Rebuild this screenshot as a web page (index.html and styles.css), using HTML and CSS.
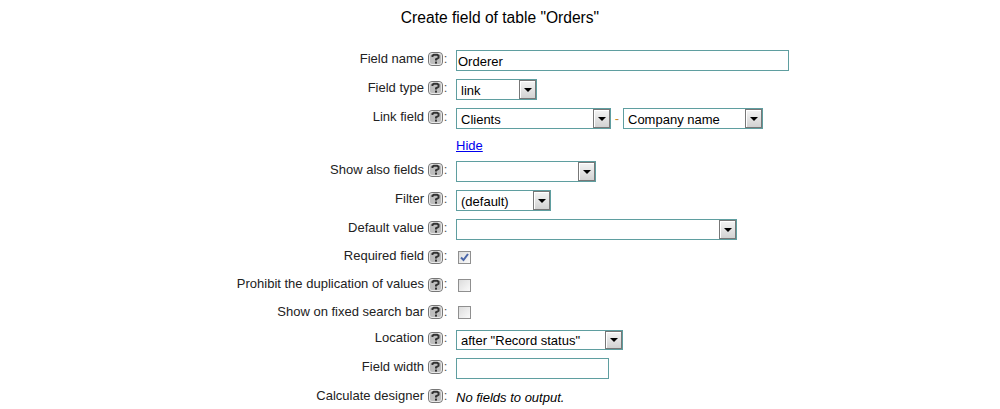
FILE: index.html
```html
<!DOCTYPE html>
<html lang="en">
<head>
<meta charset="utf-8">
<title>Create field</title>
<link rel="stylesheet" href="styles.css">
</head>
<body>
<svg class="defs" width="0" height="0" aria-hidden="true">
  <symbol id="help" viewBox="0 0 15 14">
    <rect x="0.5" y="0.5" width="14" height="13" rx="3.5" fill="#bdbdbd" stroke="#777"/>
    <rect x="1.5" y="1.5" width="12" height="11" rx="2.5" fill="none" stroke="#e8e8e8"/>
    <path d="M4.5 5V3.8L5.8 2.8H9.2L10.5 3.8V5.8L8 7.4V8.6" fill="none" stroke="#333" stroke-width="2"/>
    <rect x="7" y="9.6" width="2" height="2" fill="#333"/>
  </symbol>
</svg>
<h1 class="title">Create field of table "Orders"</h1>
<div class="form">
  <div class="row h29"><div class="label">Field name<svg class="help"><use href="#help"/></svg><span class="colon">:</span></div><div class="ctl"><input class="text w333" type="text" value="Orderer"></div></div>
  <div class="row h29"><div class="label">Field type<svg class="help"><use href="#help"/></svg><span class="colon">:</span></div><div class="ctl"><div class="select w81"><span class="val">link</span><span class="btn"></span></div></div></div>
  <div class="row h29"><div class="label">Link field<svg class="help"><use href="#help"/></svg><span class="colon">:</span></div><div class="ctl"><div class="select w155"><span class="val">Clients</span><span class="btn"></span></div><span class="sep">-</span><div class="select w140"><span class="val">Company name</span><span class="btn"></span></div></div></div>
  <div class="row h24"><div class="label"></div><div class="ctl hide-cell"><a class="link" href="#">Hide</a></div></div>
  <div class="row h29"><div class="label">Show also fields<svg class="help"><use href="#help"/></svg><span class="colon">:</span></div><div class="ctl"><div class="select w140"><span class="val"></span><span class="btn"></span></div></div></div>
  <div class="row h29"><div class="label">Filter<svg class="help"><use href="#help"/></svg><span class="colon">:</span></div><div class="ctl"><div class="select w95"><span class="val">(default)</span><span class="btn"></span></div></div></div>
  <div class="row h29"><div class="label">Default value<svg class="help"><use href="#help"/></svg><span class="colon">:</span></div><div class="ctl"><div class="select w281"><span class="val"></span><span class="btn"></span></div></div></div>
  <div class="row h28 tight"><div class="label">Required field<svg class="help"><use href="#help"/></svg><span class="colon">:</span></div><div class="ctl"><span class="check"><svg viewBox="0 0 9 9" width="9" height="9"><path d="M1 4.5L3.5 7L8 1" fill="none" stroke="#4a66a8" stroke-width="2"/></svg></span></div></div>
  <div class="row h27 tight"><div class="label">Prohibit the duplication of values<svg class="help"><use href="#help"/></svg><span class="colon">:</span></div><div class="ctl"><span class="check"></span></div></div>
  <div class="row h27"><div class="label">Show on fixed search bar<svg class="help"><use href="#help"/></svg><span class="colon">:</span></div><div class="ctl"><span class="check"></span></div></div>
  <div class="row h28 tight"><div class="label">Location<svg class="help"><use href="#help"/></svg><span class="colon">:</span></div><div class="ctl"><div class="select w167 short"><span class="val">after "Record status"</span><span class="btn"></span></div></div></div>
  <div class="row h29"><div class="label">Field width<svg class="help"><use href="#help"/></svg><span class="colon">:</span></div><div class="ctl"><input class="text w153" type="text"></div></div>
  <div class="row h22"><div class="label">Calculate designer<svg class="help"><use href="#help"/></svg><span class="colon">:</span></div><div class="ctl note">No fields to output.</div></div>
</div>
</body>
</html>
```

FILE: styles.css
```css
html, body {
  margin: 0;
  padding: 0;
  background: #fff;
  overflow: hidden;
}
body {
  width: 1000px;
  height: 409px;
  font-family: "Liberation Sans", Arial, sans-serif;
  font-size: 13px;
  color: #000;
}
.defs { position: absolute; }
.title {
  margin: 0;
  height: 50px;
  padding-top: 9px;
  box-sizing: border-box;
  font-size: 15.6px;
  font-weight: normal;
  line-height: 18px;
  text-align: center;
}
.row { display: flex; align-items: flex-start; }
.h29 { height: 29px; }
.h28 { height: 28px; }
.h27 { height: 27px; }
.h24 { height: 24px; }
.h22 { height: 22px; }
.label {
  width: 448px;
  flex: none;
  display: flex;
  justify-content: flex-end;
  align-items: flex-start;
  height: 18px;
  line-height: 18px;
  white-space: nowrap;
  color: #222;
}
.tight .label { line-height: 16px; }
.help { width: 15px; height: 14px; margin: 2px 0 0 4px; flex: none; }
.colon { width: 5px; text-align: center; color: #555; }
.ctl {
  margin-left: 8px;
  display: flex;
  align-items: flex-start;
}
.text {
  display: block;
  box-sizing: border-box;
  height: 21px;
  margin: 0;
  padding: 1px 1px 0;
  border: 1px solid #5f9ea0;
  outline: none;
  font: 13px "Liberation Sans", Arial, sans-serif;
  color: #000;
  background: #fff;
}
.w333 { width: 333px; }
.w153 { width: 153px; }
.select {
  box-sizing: border-box;
  height: 21px;
  border: 1px solid #5f9ea0;
  display: flex;
  background: #fff;
}
.w81 { width: 81px; }
.w95 { width: 95px; }
.w140 { width: 140px; }
.w155 { width: 155px; }
.w167 { width: 167px; }
.w281 { width: 281px; }
.val {
  flex: 1;
  padding-left: 4px;
  line-height: 21px;
  white-space: nowrap;
}
.btn {
  width: 17px;
  flex: none;
  box-sizing: border-box;
  height: 19px;
  border: 1px solid #777;
  box-shadow: inset 1px 1px 0 #fff;
  background: linear-gradient(#f4f4f4, #d2d2d2);
  display: flex;
  align-items: center;
  justify-content: center;
}
.btn::after {
  content: "";
  width: 0;
  height: 0;
  border-left: 4px solid transparent;
  border-right: 4px solid transparent;
  border-top: 4px solid #000;
}
.short { height: 20px; }
.short .val { line-height: 19px; }
.short .btn { height: 18px; }
.sep {
  width: 12px;
  text-align: center;
  line-height: 21px;
  color: #c98a2a;
}
.hide-cell { line-height: 18px; }
.link { color: #0000ee; }
.check {
  display: flex;
  align-items: center;
  justify-content: center;
  box-sizing: border-box;
  width: 13px;
  height: 13px;
  margin: 3px 0 0 2px;
  border: 1px solid #8f8f8f;
  background: linear-gradient(135deg, #dcdcdc, #fafafa);
}
.note {
  font-style: italic;
  line-height: 18px;
  padding-top: 2px;
}
```
